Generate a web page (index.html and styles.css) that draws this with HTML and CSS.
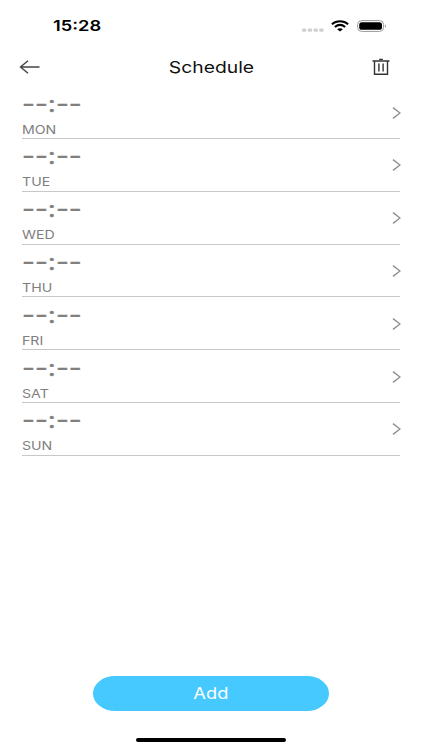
FILE: index.html
```html
<!DOCTYPE html>
<html lang="en">
<head>
<meta charset="utf-8">
<title>Schedule</title>
<link rel="stylesheet" href="styles.css">
</head>
<body>
<div class="screen">
  <div class="status">
    <span class="clock">15:28</span>
    <svg class="signal" width="22" height="4" viewBox="0 0 22 4" fill="#cfcfcf"><rect x="0" y=".4" width="4.2" height="3.3" rx="1.2"/><rect x="5.8" y=".4" width="4.2" height="3.3" rx="1.2"/><rect x="11.6" y=".4" width="4.2" height="3.3" rx="1.2"/><rect x="17.3" y=".4" width="4.2" height="3.3" rx="1.2"/></svg>
    <svg class="wifi" width="18" height="12" viewBox="0 0 18 12" fill="none" stroke="#000" stroke-width="2"><path d="M.9 4.3C5.4.3 12.6.3 17.1 4.3"/><path d="M3.800 7C7 4.400 11 4.400 14.200 7"/><path d="M9 11.400 6.100 9.200C7.700 7.900 10.300 7.900 11.900 9.200Z" fill="#000" stroke="none"/></svg>
    <svg class="battery" width="30" height="12" viewBox="0 0 30 12"><rect x=".6" y=".6" width="26" height="10.800" rx="4" fill="#fff" stroke="#999" stroke-width="1"/><rect x="2.200" y="2.200" width="22.800" height="7.600" rx="2.600"/><path d="M28 4.300c1.300.4 1.300 3 0 3.400z" fill="#999"/></svg>
  </div>
  <header class="header">
    <svg class="back" width="22" height="16" viewBox="0 0 22 16" fill="none" stroke="#444" stroke-width="1.400"><path d="M20.500 8H1.500M9 1.800 1.500 8 9 14.200"/></svg>
    <h1 class="title">Schedule</h1>
    <svg class="trash" width="18" height="18" viewBox="0 0 18 18" fill="none" stroke="#333" stroke-width="1.400"><path d="M.5 3h17M2.500 3v13.300h13V3M6.900 5.500v8M11.100 5.500v8"/><path d="M7.800 2.100V1.300h2.400v.8" stroke-width="1.300"/></svg>
  </header>
  <main class="days">
    <div class="day"><div><div class="time">--:--</div><div class="name">MON</div></div><svg class="chevron" viewBox="0 0 9 12"><path d="M1 .6 8 6 1 11.400"/></svg></div>
    <div class="day"><div><div class="time">--:--</div><div class="name">TUE</div></div><svg class="chevron" viewBox="0 0 9 12"><path d="M1 .6 8 6 1 11.400"/></svg></div>
    <div class="day"><div><div class="time">--:--</div><div class="name">WED</div></div><svg class="chevron" viewBox="0 0 9 12"><path d="M1 .6 8 6 1 11.400"/></svg></div>
    <div class="day"><div><div class="time">--:--</div><div class="name">THU</div></div><svg class="chevron" viewBox="0 0 9 12"><path d="M1 .6 8 6 1 11.400"/></svg></div>
    <div class="day"><div><div class="time">--:--</div><div class="name">FRI</div></div><svg class="chevron" viewBox="0 0 9 12"><path d="M1 .6 8 6 1 11.400"/></svg></div>
    <div class="day"><div><div class="time">--:--</div><div class="name">SAT</div></div><svg class="chevron" viewBox="0 0 9 12"><path d="M1 .6 8 6 1 11.400"/></svg></div>
    <div class="day"><div><div class="time">--:--</div><div class="name">SUN</div></div><svg class="chevron" viewBox="0 0 9 12"><path d="M1 .6 8 6 1 11.400"/></svg></div>
  </main>
  <footer class="footer">
    <button class="add"><span class="add-label">Add</span></button>
    <div class="home"></div>
  </footer>
</div>
</body>
</html>
```
FILE: styles.css
```css
* { box-sizing: border-box; }
body { margin: 0; background: #fff; font-family: Inter, "Liberation Sans", sans-serif; }
.screen { width: 422px; height: 750px; display: flex; flex-direction: column; overflow: hidden; background: #fff; }
svg { display: block; flex: none; }
.status { height: 46px; padding: 6px 35px 0 53px; display: flex; align-items: center; }
.clock { font-size: 15px; font-weight: 600; line-height: 20px; transform: scaleX(1.220); transform-origin: left; margin-right: auto; }
.signal { margin: 8px 7px 0 0; }
.wifi { margin-right: 8px; }
.header { height: 40px; padding: 2px 32px 0 19px; display: flex; align-items: center; justify-content: space-between; }
.title { margin: 0 0 0 9px; font-size: 16.500px; font-weight: 400; line-height: 22px; transform: scaleX(1.170); color: #111; }
.back { margin-top: -1px; }
.days { padding: .2px 22px 0; }
.day { height: 52.800px; display: flex; align-items: center; justify-content: space-between; border-bottom: 1px solid #c8c8c8; }
.time { font-size: 23px; font-weight: 400; line-height: 24px; margin-top: 4px; color: #808080; -webkit-text-stroke: .4px #808080; transform: scaleX(1.220); transform-origin: left; width: max-content; }
.name { font-size: 12px; line-height: 16px; margin: 6px 0 -1px; color: #808080; transform: scaleX(1.180); transform-origin: left; width: max-content; }
.chevron { width: 9px; height: 12px; margin: 1px -1px 0 0; fill: none; stroke: #909090; stroke-width: 1.400; }
.footer { margin-top: auto; display: flex; flex-direction: column; align-items: center; padding-bottom: 8px; }
.add { width: 236px; height: 35px; border: 0; border-radius: 22px / 17.500px; background: #45c9ff; color: #fff; font-family: inherit; padding: 1px 0 0; }
.add-label { display: inline-block; font-size: 15.500px; line-height: 22px; transform: scaleX(1.180); }
.home { width: 150px; height: 4px; border-radius: 2px; background: #000; margin-top: 27px; }
```
